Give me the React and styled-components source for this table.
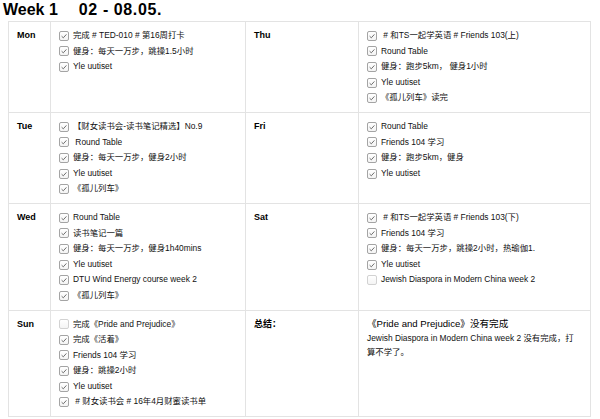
import React from "react";
import styled, { createGlobalStyle } from "styled-components";

const week = [
  [
    {
      day: "Mon",
      items: [
        [true, "完成 # TED-010 # 第16周打卡"],
        [true, "健身：每天一万步，跳操1.5小时"],
        [true, "Yle uutiset"],
      ],
    },
    {
      day: "Thu",
      items: [
        [true, " # 和TS一起学英语 # Friends 103(上)"],
        [true, "Round Table"],
        [true, "健身：跑步5km， 健身1小时"],
        [true, "Yle uutiset"],
        [true, "《孤儿列车》读完"],
      ],
    },
  ],
  [
    {
      day: "Tue",
      items: [
        [true, "【财女读书会-读书笔记精选】No.9"],
        [true, " Round Table"],
        [true, "健身：每天一万步，健身2小时"],
        [true, "Yle uutiset"],
        [true, "《孤儿列车》"],
      ],
    },
    {
      day: "Fri",
      items: [
        [true, "Round Table"],
        [true, "Friends 104 学习"],
        [true, "健身：跑步5km，健身"],
        [true, "Yle uutiset"],
      ],
    },
  ],
  [
    {
      day: "Wed",
      items: [
        [true, "Round Table"],
        [true, "读书笔记一篇"],
        [true, "健身：每天一万步，健身1h40mins"],
        [true, "Yle uutiset"],
        [true, "DTU Wind Energy course week 2"],
        [true, "《孤儿列车》"],
      ],
    },
    {
      day: "Sat",
      items: [
        [true, " # 和TS一起学英语 # Friends 103(下)"],
        [true, "Friends 104 学习"],
        [true, "健身：每天一万步，跳操2小时，热瑜伽1."],
        [true, "Yle uutiset"],
        [false, "Jewish Diaspora in Modern China week 2"],
      ],
    },
  ],
];

const sunday = [
  [false, "完成《Pride and Prejudice》"],
  [true, "完成《活着》"],
  [true, "Friends 104 学习"],
  [true, "健身：跳操2小时"],
  [true, "Yle uutiset"],
  [true, " # 财女读书会 # 16年4月财蜜读书单"],
];

const GlobalStyle = createGlobalStyle`
  body {
    margin: 0;
    background: #fff;
    font-family: "Liberation Sans", "Noto Sans CJK SC", sans-serif;
    color: #111;
  }
`;

const Page = styled.div`
  width: 600px;
  height: 419px;
  overflow: hidden;
`;

const Title = styled.h1`
  margin: 0 0 1px 3px;
  font-size: 16px;
  line-height: 20px;
  font-weight: bold;
  color: #000;
  white-space: pre;
  span {
    margin-left: 21px;
    letter-spacing: 0.6px;
  }
`;

const Table = styled.div`
  margin-left: 8px;
  display: grid;
  grid-template-columns: 42px 195px 113px 232px;
  border-top: 1px solid #e3e3e3;
  border-left: 1px solid #e3e3e3;
  width: 582px;
`;

const Cell = styled.div`
  box-sizing: border-box;
  border-right: 1px solid #e3e3e3;
  border-bottom: 1px solid #e3e3e3;
  padding: 6px 7px 6px 8px;
`;

const DayCell = styled(Cell)`
  font-size: 9px;
  font-weight: bold;
  line-height: 15.6px;
  color: #000;
`;

const Item = styled.div`
  display: flex;
  align-items: center;
  height: 15.6px;
  line-height: 15.6px;
  font-size: 8.4px;
  white-space: pre;
  color: #111;
`;

const Box = styled.span`
  box-sizing: border-box;
  flex: none;
  width: 10px;
  height: 10px;
  margin-right: 4px;
  border: 1px solid ${(p) => (p.$checked ? "#a4a4a4" : "#d2d2d2")};
  border-radius: 2px;
  background: linear-gradient(#ffffff, #f4f4f4);
  display: flex;
  align-items: center;
  justify-content: center;
`;

const Summary = styled(Cell)`
  padding: 6px 8px;
  line-height: 14px;
`;

const Lead = styled.div`
  font-size: 9.6px;
  color: #000;
`;

const Note = styled.div`
  font-size: 8.4px;
  color: #111;
`;

const Check = ({ checked }) => (
  <Box $checked={checked}>
    {checked && (
      <svg width="8" height="8" viewBox="0 0 8 8">
        <polyline
          points="1.6,4.2 3.3,5.8 6.4,2.4"
          fill="none"
          stroke="#6f6f6f"
          strokeWidth="1"
        />
      </svg>
    )}
  </Box>
);

const Items = ({ list }) => (
  <Cell>
    {list.map(([done, text], i) => (
      <Item key={i}>
        <Check checked={done} />
        {text}
      </Item>
    ))}
  </Cell>
);

export default function App() {
  return (
    <Page>
      <GlobalStyle />
      <Title>
        Week 1<span>02 - 08.05.</span>
      </Title>
      <Table>
        {week.map((row) =>
          row.map((d) => (
            <React.Fragment key={d.day}>
              <DayCell>{d.day}</DayCell>
              <Items list={d.items} />
            </React.Fragment>
          ))
        )}
        <DayCell>Sun</DayCell>
        <Items list={sunday} />
        <DayCell>总结：</DayCell>
        <Summary>
          <Lead>《Pride and Prejudice》没有完成</Lead>
          <Note>Jewish Diaspora in Modern China week 2  没有完成，打算不学了。</Note>
        </Summary>
      </Table>
    </Page>
  );
}
